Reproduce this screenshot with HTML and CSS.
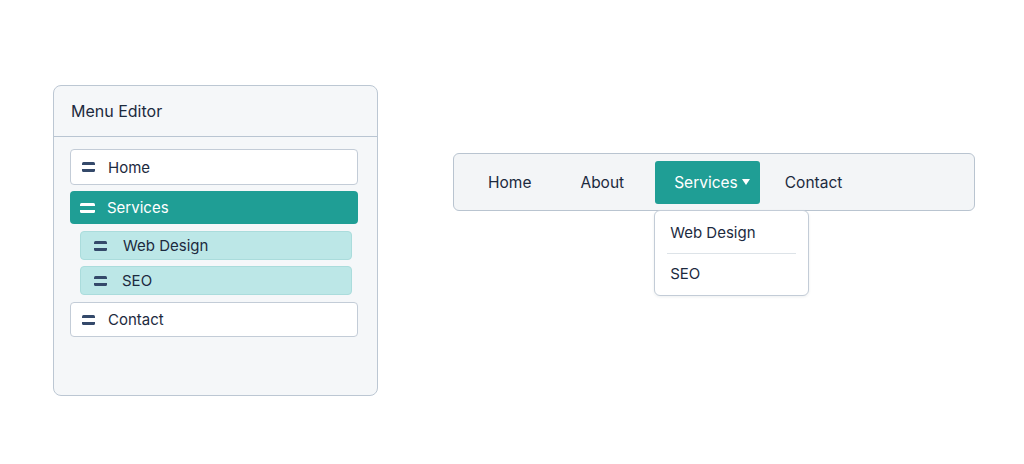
FILE: index.html
```html
<!DOCTYPE html>
<html lang="en">
<head>
    <meta charset="UTF-8">
    <meta name="viewport" content="width=device-width, initial-scale=1.0">
    <title>Menu Editor</title>
    <link rel="stylesheet" href="styles.css">
</head>
<body>

    <div class="page">

        <div class="editor">
            <div class="editor-head">Menu Editor</div>
            <div class="editor-body">
                <div class="item item-top">
                    <span class="grip"></span><span class="label">Home</span>
                </div>
                <div class="item item-active">
                    <span class="grip"></span><span class="label">Services</span>
                </div>
                <div class="item item-sub item-sub-first">
                    <span class="grip"></span><span class="label">Web Design</span>
                </div>
                <div class="item item-sub">
                    <span class="grip"></span><span class="label">SEO</span>
                </div>
                <div class="item item-top item-last">
                    <span class="grip"></span><span class="label">Contact</span>
                </div>
            </div>
        </div>

        <nav class="navbar">
            <a class="nav-link" href="#">Home</a>
            <a class="nav-link" href="#">About</a>
            <div class="nav-drop">
                <a class="nav-link nav-current" href="#">Services <span class="caret"></span></a>
                <div class="dropdown">
                    <a class="drop-link" href="#">Web Design</a>
                    <div class="drop-divider"></div>
                    <a class="drop-link drop-last" href="#">SEO</a>
                </div>
            </div>
            <a class="nav-link" href="#">Contact</a>
        </nav>

    </div>

</body>
</html>
```

FILE: styles.css
```css
body { margin: 0; background: #ffffff; font-family: Inter, "Noto Sans", "Liberation Sans", sans-serif; color: #1c2a3e; }
a { color: inherit; text-decoration: none; }

.page { display: flex; align-items: flex-start; padding: 85px 0 0 53px; }

/* menu editor panel */
.editor { box-sizing: border-box; width: 325px; height: 311px; background: #f5f7f9; border: 1px solid #bcc7d3; border-radius: 8px; }
.editor-head { box-sizing: border-box; height: 51px; padding: 0 17px; display: flex; align-items: center; font-size: 16px; border-bottom: 1.5px solid #b9c5d2; }
.editor-body { padding: 12px 19px 0 16px; }

.item { box-sizing: border-box; display: flex; align-items: center; border-radius: 4px; font-size: 15px; margin-bottom: 6px; }
.item-top { height: 36px; padding-left: 11px; background: #ffffff; border: 1px solid #c3ccd7; }
.item-top .label { margin-left: 13px; }
.item-last { height: 35px; }
.item-active { height: 33px; padding-left: 10px; background: #1f9e95; color: #ffffff; margin-bottom: 7px; }
.item-active .label { margin-left: 12px; }
.item-sub { height: 29px; margin: 0 6px 7px 10px; padding-left: 13px; background: #bce7e7; border: 1px solid #aadcdc; }
.item-sub .label { margin-left: 15px; }
.item-sub-first .label { margin-left: 16px; }
.item-sub-first { margin-bottom: 6px; }

.grip { width: 13px; height: 10px; border-top: 3px solid #34496a; border-bottom: 3px solid #34496a; box-sizing: border-box; border-radius: 1.5px; }
.item-active .grip { width: 15px; height: 10px; border-color: #ffffff; }

/* navbar preview */
.navbar { box-sizing: border-box; width: 522px; height: 58px; margin: 68px 0 0 75px; padding: 6px 16px; display: flex; align-items: center; gap: 13px; background: #f3f5f7; border: 1.5px solid #b9c4d0; border-radius: 6px; }
.nav-link { height: 43px; padding: 0 18px; display: flex; align-items: center; font-size: 15.5px; }
.nav-drop { position: relative; margin-right: -6px; }
.nav-current { padding: 0 10px 0 19px; background: #1f9e95; color: #ffffff; border-radius: 3px; }
.caret { width: 0; height: 0; margin-left: 4px; border-left: 4.5px solid transparent; border-right: 4.5px solid transparent; border-top: 6px solid #ffffff; }

.dropdown { position: absolute; top: 49px; left: -1px; width: 155px; box-sizing: border-box; padding: 2px 0 3px; background: #ffffff; border: 1.5px solid #c3ccd7; border-radius: 6px; box-shadow: 0 1px 3px rgba(30, 45, 65, 0.08); }
.drop-link { display: flex; align-items: center; height: 40px; padding: 0 15px; font-size: 15px; }
.drop-last { height: 38px; }
.drop-divider { height: 1.5px; margin: 0 12px; background: #dde3e8; }
```
